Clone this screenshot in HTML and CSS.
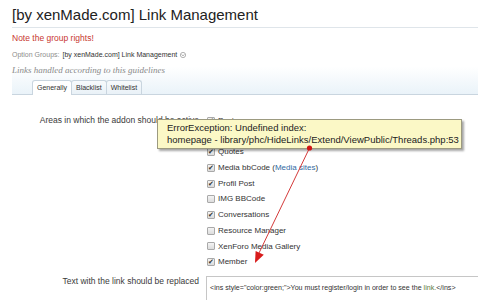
FILE: index.html
```html
<!DOCTYPE html>
<html lang="en">
<head>
    <meta charset="UTF-8">
    <meta name="viewport" content="width=device-width, initial-scale=1.0">
    <title>Link Management</title>
    <link rel="stylesheet" href="styles.css">
</head>
<body>
    <div class="page">
        <h1 class="title">[by xenMade.com] Link Management</h1>
        <p class="notice">Note the group rights!</p>

        <div class="tab-head">
            <div class="groups">
                <span class="muted">Option Groups:</span> [by xenMade.com] Link Management
                <span class="drop">
                    <svg viewBox="0 0 8 8" width="6" height="6"><circle cx="4" cy="4" r="3.5" fill="#fff" stroke="#999"/><path d="M2.3 3.3 L4 5 L5.7 3.3" fill="none" stroke="#777"/></svg>
                </span>
            </div>
            <p class="desc">Links handled according to this guidelines</p>
            <ul class="tabs">
                <li class="active">Generally</li>
                <li>Blacklist</li>
                <li>Whitelist</li>
            </ul>
        </div>

        <div class="form">
            <div class="row">
                <div class="label">Areas in which the addon should be active</div>
                <ul class="checks">
                    <li><span class="cb on"></span>Posts</li>
                    <li><span class="cb on"></span></li>
                    <li><span class="cb on"></span>Quotes</li>
                    <li><span class="cb on"></span>Media bbCode (<a href="#">Media sites</a>)</li>
                    <li><span class="cb on"></span>Profil Post</li>
                    <li><span class="cb"></span>IMG BBCode</li>
                    <li><span class="cb on"></span>Conversations</li>
                    <li><span class="cb"></span>Resource Manager</li>
                    <li><span class="cb"></span>XenForo Media Gallery</li>
                    <li><span class="cb on"></span>Member</li>
                </ul>
            </div>
            <div class="row">
                <div class="label label-text">Text with the link should be replaced</div>
                <div class="textbox">&lt;ins style="color:green;"&gt;You must register/login in order to see the <span class="hl">link.</span>&lt;/ins&gt;</div>
            </div>
        </div>

        <!-- Fehlermeldung ueber dem Formular -->
        <div class="tooltip">
            ErrorException: Undefined index:<br>
            homepage - library/phc/HideLinks/Extend/ViewPublic/Threads.php:53
        </div>

        <svg class="arrow" width="478" height="300" viewBox="0 0 478 300">
            <line x1="309.5" y1="148" x2="259" y2="253" stroke="#d43a3a" stroke-width="1"/>
            <polygon points="255,263 263.8,254.7 255.6,250.9" fill="#d81c1c"/>
            <circle cx="309.5" cy="148" r="2.6" fill="#d01414"/>
        </svg>
    </div>
</body>
</html>
```

FILE: styles.css
```css
/* Grundlayout */
body {
    margin: 0;
    font-family: "Liberation Sans", Arial, sans-serif;
    color: #333;
    background-color: #fff;
    overflow: hidden;
}

.page {
    position: relative;
    width: 478px;
    height: 300px;
    overflow: hidden;
}

/* Titel */
.title {
    margin: 0 0 0 12px;
    padding: 6px 0 3px;
    font-size: 15px;
    font-weight: normal;
    line-height: 18px;
    color: #222;
    border-bottom: 1px solid #dfe5ea;
}

.notice {
    margin: 5px 0 0 12px;
    font-size: 8.5px;
    line-height: 11px;
    color: #c8372f;
}

/* Kopfbereich mit Tabs */
.tab-head {
    margin-left: 12px;
    padding-top: 5px;
    background: linear-gradient(to bottom, #fff 45%, #eaf3f9 100%);
    border-bottom: 1px solid #c9d5df;
}

.groups {
    font-size: 7px;
    line-height: 12px;
    color: #333;
    display: flex;
    align-items: center;
    gap: 2px;
}

.groups .muted {
    color: #8c8c8c;
    margin-right: 1px;
}

.drop {
    display: inline-flex;
    margin-left: 1px;
}

.desc {
    margin: 3px 0 0;
    font-family: "Liberation Serif", Georgia, serif;
    font-style: italic;
    font-size: 9px;
    line-height: 12px;
    color: #8a8a8a;
}

.tabs {
    list-style: none;
    margin: 4px 0 0;
    padding: 0 0 0 20px;
    display: flex;
}

.tabs li {
    font-size: 7px;
    line-height: 13px;
    padding: 0 4px;
    color: #333;
    border: 1px solid #c9d5df;
    border-bottom: none;
    border-radius: 3px 3px 0 0;
    background: linear-gradient(to bottom, #f7fafc, #e9f1f7);
    margin-right: -1px;
}

.tabs li.active {
    background: #fff;
    margin-bottom: -1px;
    padding-bottom: 1px;
    position: relative;
}

/* Formular */
.form {
    padding-top: 18px;
}

.row {
    display: grid;
    grid-template-columns: 187px 1fr;
    column-gap: 8px;
    margin-left: 12px;
}

.label {
    text-align: right;
    font-size: 8.5px;
    line-height: 15.7px;
    color: #3a3a3a;
}

.label-text {
    padding-top: 5px;
    line-height: 12px;
}

.checks {
    list-style: none;
    margin: 0;
    padding: 0;
}

.checks li {
    display: flex;
    align-items: center;
    font-size: 8px;
    line-height: 15.7px;
    height: 15.7px;
    color: #333;
    white-space: nowrap;
}

.checks a {
    color: #2f6aa3;
    text-decoration: none;
}

.cb {
    width: 6px;
    height: 6px;
    border: 1px solid #a9a9a9;
    border-radius: 1px;
    background: linear-gradient(to bottom, #f4f4f4, #dcdcdc);
    margin-right: 3px;
    position: relative;
}

.cb.on::after {
    content: "\2714";
    position: absolute;
    left: 0;
    top: -4px;
    font-family: "DejaVu Sans", sans-serif;
    font-size: 7px;
    color: #333;
}

.textbox {
    margin-top: 6px;
    margin-left: -1px;
    width: 290px;
    height: 40px;
    border: 1px solid #c6c6c6;
    padding: 6px 3px;
    font-size: 7.1px;
    line-height: 10px;
    color: #333;
    white-space: nowrap;
}

.textbox .hl {
    color: #5b7a3c;
}

/* Tooltip */
.tooltip {
    position: absolute;
    left: 157px;
    top: 119px;
    width: 285px;
    padding: 2px 9px 3px;
    background-color: #fbf8c6;
    border: 1px solid #9c9a80;
    box-shadow: 2px 2px 2px rgba(0, 0, 0, 0.35);
    font-size: 9.5px;
    line-height: 11.5px;
    color: #222;
    white-space: nowrap;
}

.arrow {
    position: absolute;
    left: 0;
    top: 0;
    pointer-events: none;
}
```
